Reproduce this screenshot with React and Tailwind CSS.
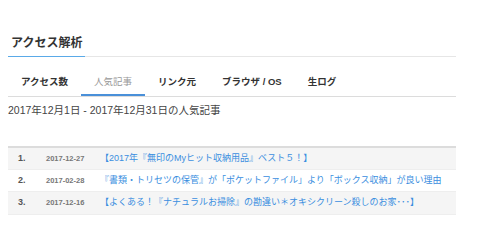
import React from 'react';

const tabs = [
    { label: 'アクセス数' },
    { label: '人気記事', active: true },
    { label: 'リンク元' },
    { label: 'ブラウザ / OS' },
    { label: '生ログ' },
];

const rows = [
    { no: '1.', date: '2017-12-27', title: '【2017年『無印のMyヒット収納用品』ベスト５！】' },
    { no: '2.', date: '2017-02-28', title: '『書類・トリセツの保管』が「ポケットファイル」より「ボックス収納」が良い理由' },
    { no: '3.', date: '2017-12-16', title: '【よくある！『ナチュラルお掃除』の勘違い＊オキシクリーン殺しのお家･･･】' },
];

const App = () => {
    return (
        <div className="w-[480px] h-[240px] bg-white overflow-hidden px-[8px] text-[#333]" style={{ fontFamily: '"Liberation Sans", "Noto Sans CJK JP", sans-serif' }}>
            <div className="w-[448px]">
                {/* Header */}
                <div className="pt-[35px] pl-[3px] pb-[5px] h-[56px]">
                    <h1 className="text-[12px] leading-[16px] font-bold">アクセス解析</h1>
                </div>
                <div className="flex">
                    <div className="w-[77px] h-px bg-[#5aaae8]" />
                    <div className="flex-1 h-px bg-[#e6e6e6]" />
                </div>

                {/* Tabs */}
                <div className="flex mt-[15px] border-b border-[#dcdcdc]">
                    {tabs.map((t, i) => (
                        <div
                            key={i}
                            className={
                                t.active
                                    ? 'px-[13px] h-[24px] text-[9.5px] leading-[20px] text-[#999] border-b-2 border-[#4a90d9]'
                                    : 'px-[13px] h-[24px] text-[9.5px] leading-[20px] font-bold text-[#333]'
                            }
                        >
                            {t.label}
                        </div>
                    ))}
                </div>

                <p className="mt-[6px] text-[10.5px] leading-[14px] text-[#444]">2017年12月1日 - 2017年12月31日の人気記事</p>

                {/* Table */}
                <div className="mt-[29px] border-t-2 border-[#dcdcdc] border-b border-b-[#eee]">
                    {rows.map((r, i) => (
                        <div key={i} className={`flex items-center h-[22px] border-b border-[#eee] last:border-b-0 ${i === 1 ? 'bg-white' : 'bg-[#f5f5f5]'}`}>
                            <span className="w-[38px] pl-[10px] text-[9px] font-bold text-[#555]">{r.no}</span>
                            <span className="w-[54px] text-[7.5px] font-bold text-[#777]">{r.date}</span>
                            <span className="text-[9px] text-[#3a8ee0] whitespace-nowrap">{r.title}</span>
                        </div>
                    ))}
                </div>
            </div>
        </div>
    );
};

export default App;
